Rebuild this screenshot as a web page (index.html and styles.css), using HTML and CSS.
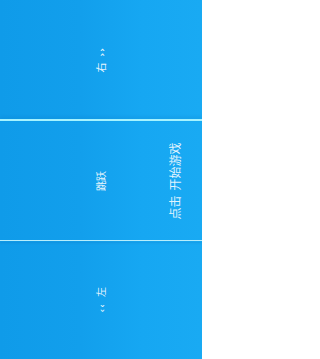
FILE: index.html
```html
<!DOCTYPE html>
<html lang="zh">
<head>
<meta charset="utf-8">
<link rel="stylesheet" href="styles.css">
</head>
<body>
<main class="screen">
  <section class="band band-top">
    <span class="vtext label">右<span class="arrows arrows-after">››</span></span>
  </section>
  <div class="divider divider-a"></div>
  <section class="band band-mid">
    <span class="vtext label">跳跃</span>
    <span class="vtext prompt">点击<span class="gap"></span>开始游戏</span>
  </section>
  <div class="divider divider-b"></div>
  <section class="band band-bottom">
    <span class="vtext label"><span class="arrows arrows-before">‹‹</span>左</span>
  </section>
</main>
</body>
</html>
```
FILE: styles.css
```css
html, body {
  margin: 0;
  padding: 0;
}
body {
  width: 202px;
  height: 359px;
  overflow: hidden;
  font-family: "Noto Sans CJK SC", "Noto Sans", sans-serif;
}
.screen {
  display: flex;
  flex-direction: column;
  width: 202px;
  height: 359px;
  background: linear-gradient(to right, #0f9be9 0%, #129fec 40%, #16a7f2 70%, #19aaf3 100%);
}
.band {
  position: relative;
  display: flex;
  align-items: center;
  justify-content: center;
}
.band-top { height: 119px; }
.band-mid { height: 119px; }
.band-bottom { flex: 1; }
.divider-a {
  height: 2px;
  background: #a6f3ff;
  box-shadow: 0 -2px 3px rgba(0, 80, 160, 0.15);
}
.divider-b {
  height: 1px;
  background: #b7eefc;
  box-shadow: 0 2px 2px rgba(0, 70, 150, 0.2);
}
.vtext {
  writing-mode: vertical-rl;
  text-orientation: sideways;
  transform: rotate(180deg);
  white-space: nowrap;
  color: rgba(255, 255, 255, 0.9);
}
.label {
  font-size: 10px;
  line-height: 10px;
}
.arrows {
  font-family: "DejaVu Sans", sans-serif;
  font-size: 9px;
  font-weight: bold;
  letter-spacing: 1px;
}
.arrows-after { margin-inline-start: 6px; }
.arrows-before { margin-inline-end: 6px; }
.prompt {
  position: absolute;
  right: 21px;
  top: 50%;
  transform: translateY(-50%) rotate(180deg);
  font-size: 12px;
  line-height: 12px;
  color: rgba(255, 255, 255, 0.88);
}
.gap {
  display: inline-block;
  block-size: 1px;
  inline-size: 5px;
}
```
